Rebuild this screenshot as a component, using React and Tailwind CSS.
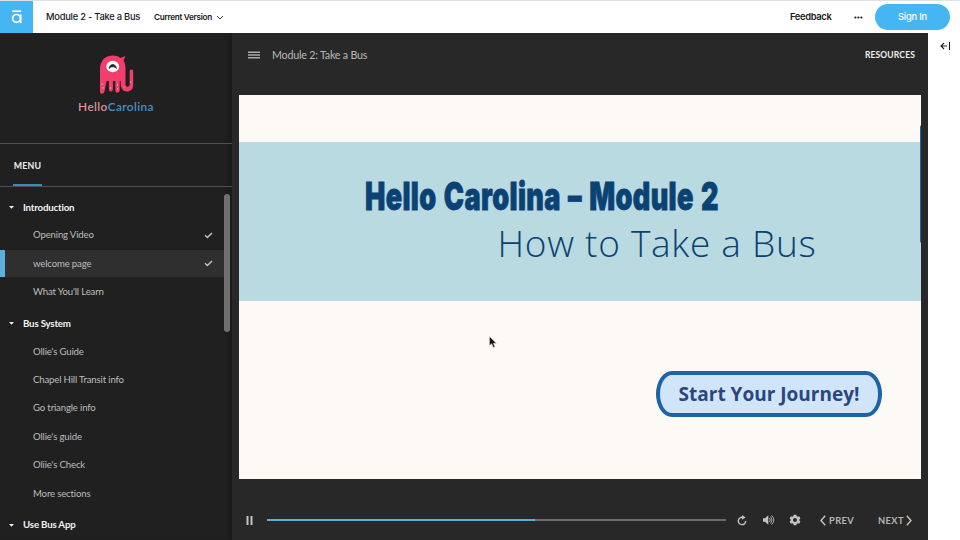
const sections = [
  {
    title: 'Introduction',
    items: [
      { label: 'Opening Video', done: true },
      { label: 'welcome page', done: true, active: true },
      { label: "What You'll Learn" },
    ],
  },
  {
    title: 'Bus System',
    items: [
      { label: "Ollie's Guide" },
      { label: 'Chapel Hill Transit info' },
      { label: 'Go triangle info' },
      { label: "Ollie's guide" },
      { label: "Oliie's Check" },
      { label: 'More sections' },
    ],
  },
  { title: 'Use Bus App', items: [] },
];

function TopBar() {
  return (
    <header className="flex h-[33px] shrink-0 items-center border-t border-[#dfe2e4] bg-white font-['Inter',sans-serif] text-[#17191c]">
      <div className="flex h-8 w-[33px] items-center justify-center bg-[#45b6f2]">
        <svg width="12" height="14" viewBox="0 0 12 14" fill="none" stroke="white" strokeWidth="1.7">
          <path d="M1.2 1.2h9" />
          <circle cx="5.5" cy="8.4" r="3.9" />
          <path d="M9.7 4.3v8.8" />
        </svg>
      </div>
      <span className="ml-[13px] w-[108px] whitespace-nowrap text-[9.3px] font-medium tracking-[-0.22px]">Module 2 - Take a Bus</span>
      <span className="w-[62px] whitespace-nowrap text-[8.2px] font-semibold tracking-[-0.3px]">Current Version</span>
      <svg width="8" height="6" viewBox="0 0 8 6" fill="none" stroke="#333" strokeWidth="1" className="mt-px">
        <path d="M1 1l3 3 3-3" />
      </svg>
      <span className="ml-auto w-[64px] whitespace-nowrap text-[9.4px] font-semibold tracking-[-0.35px]">Feedback</span>
      <svg width="9" height="3" viewBox="0 0 9 3" fill="#17191c" className="mr-[12px]">
        <circle cx="1.4" cy="1.5" r="1.1" />
        <circle cx="4.4" cy="1.5" r="1.1" />
        <circle cx="7.4" cy="1.5" r="1.1" />
      </svg>
      <button className="mr-[10px] h-[26px] w-[75px] rounded-full bg-[#45b6f2] text-[9.3px] font-medium tracking-[-0.2px] text-white">Sign In</button>
    </header>
  );
}

function Brand() {
  return (
    <div className="flex h-[111px] shrink-0 flex-col items-center border-b border-[#505050] pt-[21px]">
      <svg width="38" height="42" viewBox="0 0 38 42">
        <path
          d="M3 38V15C3 6.500 8.500 1.500 15.500 1.500c3.300 0 5.500.8 8 2.400L28.500 2l-2 4.500c1.400 2.400 2 5 2 8.500V30c0 3.500 4.200 3.500 4.200 0V17.500c0-2.600 3.500-2.600 3.500 0V31c0 4.300-2.700 6.500-6 6.500-3.600 0-5.800-2-6.300-5.500L23.700 27h-1v9c0 3.500-4 3.500-4.400.8V27h-2.400v8c0 3.300-3.700 3.300-4 .4V27H9.600L7.500 37.500c-.5 2.600-4.500 3.200-4.500.5z"
          fill="#f33d6b"
        />
        <ellipse cx="15.700" cy="12.500" rx="6.400" ry="5.800" fill="white" />
        <path d="M12 14.500c.5-5.300 7-5.300 7.400 0-2-2.300-5.300-2.300-7.400 0z" fill="#231f20" stroke="#231f20" strokeWidth="0.700" />
        <g fill="#ffb3c5">
          <circle cx="5" cy="30" r=".7" />
          <circle cx="6" cy="34" r=".7" />
          <circle cx="13.500" cy="34" r=".7" />
          <circle cx="20.500" cy="31" r=".7" />
          <circle cx="20.700" cy="35" r=".7" />
          <circle cx="27" cy="33" r=".6" />
          <circle cx="33.500" cy="28" r=".7" />
        </g>
      </svg>
      <div className="mt-[4px] flex whitespace-nowrap font-['Lato',sans-serif] text-[11.8px] leading-[14px] font-semibold tracking-[0.4px]">
        <span className="text-[#dc8f9f]">Hello</span>
        <span className="text-[#4790c9]">Carolina</span>
      </div>
    </div>
  );
}

function MenuItem({ item }) {
  return (
    <li className="flex h-[28.4px] items-center">
      <div
        className={
          item.active
            ? 'flex h-[27px] w-[224px] items-center border-l-[5px] border-[#5bb0dc] bg-[#2f2f2f] pt-px pr-[11px] pl-7'
            : 'flex h-[27px] w-[224px] items-center pt-px pr-[11px] pl-[33px]'
        }
      >
        <span className="flex-1 whitespace-nowrap">{item.label}</span>
        {item.done && (
          <svg width="9" height="7" viewBox="0 0 9 7" fill="none" stroke="#c4c4c4" strokeWidth="1.400" className="mb-px">
            <path d="M1 3.200l2.400 2.300L8 1" />
          </svg>
        )}
      </div>
    </li>
  );
}

function Sidebar() {
  return (
    <aside className="flex w-[232px] shrink-0 flex-col overflow-hidden bg-[#202020] font-['Lato',sans-serif] shadow-[inset_-6px_0_5px_-4px_#181818]">
      <Brand />
      <div className="flex h-[43px] shrink-0 border-b border-[#505050] pl-[13px]">
        <div className="flex w-[29px] items-center justify-center border-b-2 border-[#3c8bb0] pt-[3px] text-[8.800px] font-bold tracking-[0.150px] text-[#eee]">MENU</div>
      </div>
      <div className="flex min-h-0 flex-1 overflow-hidden pt-[3px]">
        <nav className="w-[224px] text-[9.600px] tracking-[-0.160px] text-[#bdbdbd]">
          {sections.map((s) => (
            <section key={s.title}>
              <h2 className="flex h-[31px] items-center pt-[3px] text-[9.700px] font-bold tracking-[-0.180px] whitespace-nowrap text-[#f2f2f2]">
                <svg width="5" height="3" viewBox="0 0 5 3" fill="#eee" className="mt-px mr-[9px] ml-[9px] w-[5px]">
                  <path d="M0 0h5L2.500 2.800z" />
                </svg>
                {s.title}
              </h2>
              <ul>
                {s.items.map((i) => (
                  <MenuItem key={i.label} item={i} />
                ))}
              </ul>
            </section>
          ))}
        </nav>
        <div className="mt-[4px] h-[138px] w-[5.500px] rounded-full bg-[#707070]" />
      </div>
    </aside>
  );
}

function Slide() {
  return (
    <div className="relative mr-[7px] ml-[7px] h-[384px] shrink-0 overflow-hidden bg-[#fdf9f5] pt-[47px]">
      <div className="h-[159px] bg-[#b9dae1] text-[#0b4274]">
        <h1 className="ml-[126px] origin-left scale-x-[0.713] pt-[35px] font-['Inter',sans-serif] text-[38px] leading-[38px] font-black tracking-[0.500px] whitespace-nowrap [-webkit-text-stroke:0.800px_#0b4274] [word-spacing:2.200px]">
          Hello Carolina – Module 2
        </h1>
        <p className="mt-[6px] ml-[258.500px] font-['Open_Sans',sans-serif] text-[37px] leading-[44px] font-light tracking-[0.720px] whitespace-nowrap">
          How to Take a Bus
        </p>
      </div>
      <button className="mt-[70px] ml-[417px] flex h-[46px] w-[226px] items-center justify-center rounded-[16px/23px] border-4 border-[#1c63a8] bg-[#d1e5fa] font-['Open_Sans',sans-serif] text-[19px] font-bold whitespace-nowrap text-[#29477b]">
        Start Your Journey!
      </button>
      <div className="absolute top-[30px] -right-[1px] h-[118px] w-[2px] rounded-l-full bg-[#1c63a8]" />
      <svg width="9" height="13" viewBox="0 0 9 13" className="absolute top-[241px] left-[250px]">
        <path d="M.5.500v9l2.200-1.800L4.300 11.500l1.600-.7-1.600-3.500h3z" fill="#111" stroke="#ddd" strokeWidth=".5" />
      </svg>
    </div>
  );
}

function Controls() {
  return (
    <div className="flex h-[61px] items-center pt-[22px] pb-px pl-[14px] font-['Lato',sans-serif] text-[9.300px] font-bold tracking-[0.400px] text-[#b5b5b5]">
      <svg width="7" height="9" viewBox="0 0 7 9" fill="#c4c4c4">
        <path d="M.5 0h2v9h-2zM4.500 0h2v9h-2z" />
      </svg>
      <div className="ml-[14px] flex h-[2px] w-[459px] bg-[#6b6b6b]">
        <div className="h-full w-[268px] bg-[#5bb0dc]" />
      </div>
      <svg width="10" height="11" viewBox="0 0 10 11" fill="none" stroke="#c4c4c4" strokeWidth="1.400" className="ml-[11px]">
        <path d="M5.600 2.300A3.700 3.700 0 1 0 8.700 6" />
        <path d="M5 0l3.600 2.400L5 4.800z" fill="#c4c4c4" stroke="none" />
      </svg>
      <svg width="12" height="10" viewBox="0 0 12 10" fill="none" stroke="#b5b5b5" strokeWidth=".9" className="ml-[16px]">
        <path d="M0 3.200h2L5.300.3v9.400L2 6.800H0z" fill="#c4c4c4" stroke="none" />
        <path d="M6.500 3q1.500 2 0 4M7.600 1.500q3 3.500 0 7M8.800.500q4.200 4.500 0 9" />
      </svg>
      <svg width="12" height="12" viewBox="0 0 12 12" className="ml-[14px]">
        <path
          d="M4.700.800h2.600l.4 1.500 1 .5 1.500-.5 1.200 2.200-1.100 1v1l1.100 1-1.200 2.200-1.500-.5-1 .5-.4 1.500H4.700l-.4-1.500-1-.5-1.500.5L.6 7.500l1.100-1v-1l-1.100-1 1.200-2.200 1.500.5 1-.5zM6 4a2 2 0 1 0 0 4 2 2 0 0 0 0-4z"
          fill="#c4c4c4"
          fillRule="evenodd"
        />
      </svg>
      <svg width="6" height="11" viewBox="0 0 6 11" fill="none" stroke="#c4c4c4" strokeWidth="1.400" className="mr-[3px] ml-[19px]">
        <path d="M5.200.800L1 5.500l4.200 4.700" />
      </svg>
      <span className="w-[49px] pt-px">PREV</span>
      <span className="w-[28px] pt-px">NEXT</span>
      <svg width="6" height="11" viewBox="0 0 6 11" fill="none" stroke="#c4c4c4" strokeWidth="1.400">
        <path d="M.8.800L5 5.500.8 10.200" />
      </svg>
    </div>
  );
}

export default function App() {
  return (
    <div className="flex h-[540px] w-[960px] flex-col overflow-hidden bg-white">
      <TopBar />
      <div className="flex min-h-0 flex-1">
        <Sidebar />
        <main className="flex w-[696px] shrink-0 flex-col bg-[#282828]">
          <div className="flex h-[62px] shrink-0 items-center pr-[13px] pb-[18px] pl-[16px] font-['Lato',sans-serif]">
            <svg width="12" height="8" viewBox="0 0 12 8" fill="#aaa">
              <path d="M0 .500h12v1.500H0zM0 3.300h12v1.500H0zM0 6h12v1.500H0z" />
            </svg>
            <span className="ml-3 text-[10.700px] tracking-[-0.200px] whitespace-nowrap text-[#b9b9b9]">Module 2: Take a Bus</span>
            <span className="ml-auto text-[8.500px] font-bold tracking-[0.150px] text-[#eee]">RESOURCES</span>
          </div>
          <Slide />
          <Controls />
        </main>
        <div className="flex-1 pt-[9px] pl-[12px]">
          <svg width="11" height="8" viewBox="0 0 11 8" fill="none" stroke="#222" strokeWidth="1.100">
            <path d="M7 4H1M4 1L1 4l3 3M9.500 0v8" />
          </svg>
        </div>
      </div>
    </div>
  );
}
